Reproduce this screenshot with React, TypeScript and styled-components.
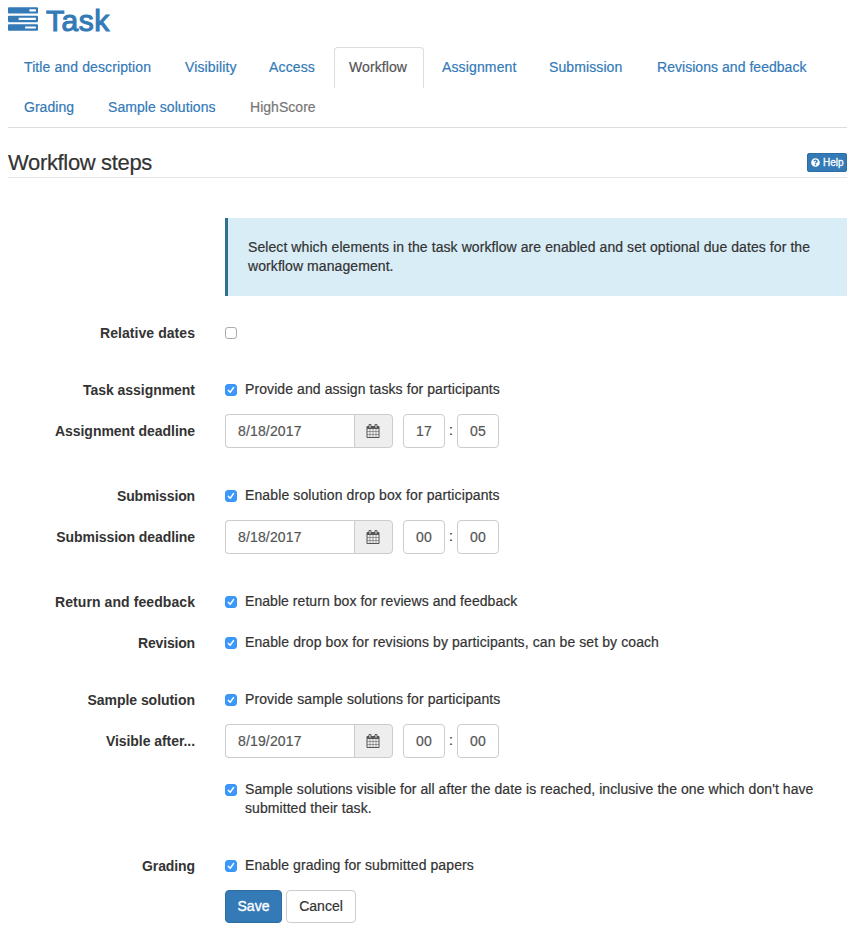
import React, { useState } from 'react';
import styled, { createGlobalStyle } from 'styled-components';
import { FaQuestionCircle } from 'react-icons/fa';

const GlobalStyle = createGlobalStyle`
  *, *::before, *::after { box-sizing: border-box; }
  body {
    margin: 0;
    background: #fff;
    color: #333;
    font: 14px/19px "Liberation Sans", Arial, sans-serif;
    -webkit-text-stroke: 0.2px currentColor;
  }
  input, button { font: inherit; }
`;

const Page = styled.main`
  width: 850px;
  height: 928px;
  overflow: hidden;
  padding: 5px 3px 0 8px;
`;

const PageTitle = styled.h1`
  display: flex;
  align-items: flex-start;
  gap: 8px;
  height: 42px;
  margin: 0;
  color: #337ab7;
  font-size: 30px;
  font-weight: 400;
  line-height: 32px;
  letter-spacing: 0.5px;
  -webkit-text-stroke: 1.1px currentColor;
  svg { display: block; }
`;

const Tabs = styled.nav`
  display: flex;
  flex-wrap: wrap;
  column-gap: 2px;
  height: 81px;
  border-bottom: 1px solid #ddd;
`;

const Tab = styled.a<{ $width: number; $track: number; $active?: boolean; $disabled?: boolean }>`
  width: ${(p) => p.$width}px;
  height: ${(p) => (p.$active ? 41 : 40)}px;
  margin-bottom: ${(p) => (p.$active ? -1 : 0)}px;
  padding: 10px 0 0 ${(p) => (p.$active ? 14 : 15)}px;
  border: 1px solid ${(p) => (p.$active ? '#ddd' : 'transparent')};
  border-bottom: 0;
  border-radius: 4px 4px 0 0;
  color: ${(p) => (p.$active ? '#555' : p.$disabled ? '#777' : '#337ab7')};
  letter-spacing: ${(p) => p.$track}px;
  white-space: nowrap;
  text-decoration: none;
`;

const SectionHeader = styled.header`
  display: flex;
  justify-content: space-between;
  align-items: flex-start;
  height: 50px;
  padding-top: 25px;
  border-bottom: 1px solid #e5e5e5;
`;

const SectionTitle = styled.h2`
  margin: -2px 0 0;
  font-size: 22px;
  font-weight: 400;
  line-height: 23px;
  letter-spacing: -0.34px;
`;

const HelpButton = styled.a`
  display: flex;
  align-items: center;
  gap: 3px;
  width: 40px;
  height: 19px;
  padding-left: 3px;
  border: 1px solid #2e6da4;
  border-radius: 2px;
  background: #337ab7;
  color: #fff;
  font-size: 10px;
  line-height: 17px;
  -webkit-text-stroke: 0.3px #fff;
`;

const Form = styled.form`
  display: flex;
  flex-direction: column;
  gap: 16px;
  padding-top: 40px;
`;

const Alert = styled.p`
  height: 78px;
  margin: 0 0 4px 217px;
  padding: 20px;
  border-left: 3px solid #31708f;
  background: #d9edf7;
  letter-spacing: 0.081px;
  white-space: pre-line;
`;

const Section = styled.section`
  display: flex;
  flex-direction: column;
`;

const Row = styled.div<{ $height?: number }>`
  display: grid;
  grid-template-columns: 187px 1fr;
  column-gap: 30px;
  height: ${(p) => p.$height ?? 41}px;
`;

const RowLabel = styled.div<{ $track?: number }>`
  padding-top: 8px;
  font-weight: 700;
  text-align: right;
  letter-spacing: ${(p) => p.$track ?? 0}px;
  -webkit-text-stroke: 0;
`;

const CheckLabel = styled.label<{ $track: number }>`
  display: flex;
  align-items: flex-start;
  gap: 8px;
  padding-top: 7px;
  letter-spacing: ${(p) => p.$track}px;
  white-space: pre-line;
`;

const HiddenInput = styled.input`
  position: absolute;
  opacity: 0;
  pointer-events: none;
`;

const Box = styled.span<{ $checked: boolean }>`
  display: block;
  flex: none;
  width: 12px;
  height: 12px;
  margin-top: 4px;
  border: 1px solid ${(p) => (p.$checked ? '#3b93f7' : '#ababab')};
  border-radius: 3px;
  background: ${(p) => (p.$checked ? '#3b99fc' : '#fff')};
  svg { display: block; }
`;

const Controls = styled.div`
  display: flex;
  align-items: flex-start;
`;

const DateInput = styled.input`
  width: 130px;
  height: 34px;
  padding: 6px 12px;
  border: 1px solid #ccc;
  border-right: 0;
  border-radius: 4px 0 0 4px;
  color: #555;
  letter-spacing: 0.15px;
  outline: 0;
`;

const CalendarButton = styled.button`
  display: flex;
  align-items: center;
  justify-content: center;
  width: 39px;
  height: 34px;
  margin: 0 10px 0 -1px;
  padding: 0 1px 0 0;
  border: 1px solid #ccc;
  border-radius: 0 4px 4px 0;
  background: #eee;
  color: #555;
`;

const TimeInput = styled.input`
  width: 42px;
  height: 34px;
  padding: 6px 0 6px 12px;
  border: 1px solid #ccc;
  border-radius: 4px;
  color: #555;
  letter-spacing: 0.1px;
  outline: 0;
`;

const Colon = styled.span`
  width: 12px;
  padding-top: 7px;
  text-align: center;
`;

const Buttons = styled.div`
  display: flex;
  gap: 4px;
  margin-left: 217px;
`;

const Button = styled.button<{ $primary?: boolean }>`
  width: ${(p) => (p.$primary ? 57 : 70)}px;
  height: 33px;
  padding: 0;
  border: 1px solid ${(p) => (p.$primary ? '#2e6da4' : '#ccc')};
  border-radius: 4px;
  background: ${(p) => (p.$primary ? '#337ab7' : '#fff')};
  color: ${(p) => (p.$primary ? '#fff' : '#333')};
  -webkit-text-stroke: ${(p) => (p.$primary ? '0.35px #fff' : '0.2px #333')};
`;

const TasksIcon = () => (
  <svg width="30" height="30" viewBox="0 0 1792 1792" fill="currentColor" aria-hidden="true">
    <path d="M1024 1408h640v-128h-640v128zM640 896h1024v-128h-1024v128zM1280 384h384v-128h-384v128zM1792 1216v256q0 26-19 45t-45 19h-1664q-26 0-45-19t-19-45v-256q0-26 19-45t45-19h1664q26 0 45 19t19 45zM1792 704v256q0 26-19 45t-45 19h-1664q-26 0-45-19t-19-45v-256q0-26 19-45t45-19h1664q26 0 45 19t19 45zM1792 192v256q0 26-19 45t-45 19h-1664q-26 0-45-19t-19-45v-256q0-26 19-45t45-19h1664q26 0 45 19t19 45z" />
  </svg>
);

const CalendarIcon = () => (
  <svg width="14" height="14" viewBox="0 0 1792 1792" fill="currentColor" aria-hidden="true">
    <path d="M192 1664h288v-288h-288v288zM544 1664h320v-288h-320v288zM192 1312h288v-320h-288v320zM544 1312h320v-320h-320v320zM192 928h288v-288h-288v288zM928 1664h320v-288h-320v288zM544 928h320v-288h-320v288zM1312 1664h288v-288h-288v288zM928 1312h320v-320h-320v320zM576 448v-288q0-13-9.5-22.5t-22.5-9.5h-64q-13 0-22.5 9.5t-9.5 22.5v288q0 13 9.5 22.5t22.5 9.5h64q13 0 22.5-9.5t9.5-22.5zM1312 1312h288v-320h-288v320zM928 928h320v-288h-320v288zM1312 928h288v-288h-288v288zM1344 448v-288q0-13-9.5-22.5t-22.5-9.5h-64q-13 0-22.5 9.5t-9.5 22.5v288q0 13 9.5 22.5t22.5 9.5h64q13 0 22.5-9.5t9.5-22.5zM1728 384v1280q0 52-38 90t-90 38h-1408q-52 0-90-38t-38-90v-1280q0-52 38-90t90-38h128v-96q0-66 47-113t113-47h64q66 0 113 47t47 113v96h384v-96q0-66 47-113t113-47h64q66 0 113 47t47 113v96h128q52 0 90 38t38 90z" />
  </svg>
);

interface CheckProps {
  text?: string;
  track?: number;
  initial?: boolean;
}

function Check({ text, track = 0, initial = true }: CheckProps) {
  const [checked, setChecked] = useState(initial);
  return (
    <CheckLabel $track={track}>
      <HiddenInput type="checkbox" checked={checked} onChange={() => setChecked(!checked)} />
      <Box $checked={checked}>
        {checked && (
          <svg width="10" height="10" viewBox="0 0 10 10" fill="none" stroke="#fff" strokeWidth="1.5" strokeLinecap="round" strokeLinejoin="round">
            <path d="M2.4 5.4L4.2 7.3L7.5 2.6" />
          </svg>
        )}
      </Box>
      {text && <span>{text}</span>}
    </CheckLabel>
  );
}

function DateTime({ date, hour, minute }: { date: string; hour: string; minute: string }) {
  return (
    <Controls>
      <DateInput defaultValue={date} aria-label="Date" />
      <CalendarButton type="button" aria-label="Open calendar">
        <CalendarIcon />
      </CalendarButton>
      <TimeInput defaultValue={hour} aria-label="Hour" />
      <Colon>:</Colon>
      <TimeInput defaultValue={minute} aria-label="Minute" />
    </Controls>
  );
}

const tabs = [
  { name: 'Title and description', width: 159, track: 0.11 },
  { name: 'Visibility', width: 82, track: 0.14 },
  { name: 'Access', width: 79, track: 0.15 },
  { name: 'Workflow', width: 90, track: 0.09, active: true },
  { name: 'Assignment', width: 105, track: 0.14 },
  { name: 'Submission', width: 106, track: 0.1 },
  { name: 'Revisions and feedback', width: 180, track: 0.04 },
  { name: 'Grading', width: 82, track: 0.03 },
  { name: 'Sample solutions', width: 140, track: 0.06 },
  { name: 'HighScore', width: 98, track: 0.03, disabled: true },
];

export default function App() {
  return (
    <>
      <GlobalStyle />
      <Page>
        <PageTitle>
          <TasksIcon />
          Task
        </PageTitle>
        <Tabs>
          {tabs.map((t) => (
            <Tab key={t.name} $width={t.width} $track={t.track} $active={t.active} $disabled={t.disabled}>
              {t.name}
            </Tab>
          ))}
        </Tabs>
        <SectionHeader>
          <SectionTitle>Workflow steps</SectionTitle>
          <HelpButton>
            <FaQuestionCircle size={9} />
            Help
          </HelpButton>
        </SectionHeader>
        <Form>
          <Alert>
            {'Select which elements in the task workflow are enabled and set optional due dates for the\nworkflow management.'}
          </Alert>
          <Section>
            <Row>
              <RowLabel $track={0.06}>Relative dates</RowLabel>
              <Check initial={false} />
            </Row>
          </Section>
          <Section>
            <Row>
              <RowLabel $track={-0.04}>Task assignment</RowLabel>
              <Check text="Provide and assign tasks for participants" track={0.085} />
            </Row>
            <Row $height={49}>
              <RowLabel $track={-0.04}>Assignment deadline</RowLabel>
              <DateTime date="8/18/2017" hour="17" minute="05" />
            </Row>
          </Section>
          <Section>
            <Row>
              <RowLabel $track={-0.13}>Submission</RowLabel>
              <Check text="Enable solution drop box for participants" track={0.12} />
            </Row>
            <Row $height={49}>
              <RowLabel $track={-0.07}>Submission deadline</RowLabel>
              <DateTime date="8/18/2017" hour="00" minute="00" />
            </Row>
          </Section>
          <Section>
            <Row>
              <RowLabel $track={0.08}>Return and feedback</RowLabel>
              <Check text="Enable return box for reviews and feedback" track={0.055} />
            </Row>
            <Row>
              <RowLabel $track={-0.17}>Revision</RowLabel>
              <Check text="Enable drop box for revisions by participants, can be set by coach" track={0.094} />
            </Row>
          </Section>
          <Section>
            <Row>
              <RowLabel $track={-0.04}>Sample solution</RowLabel>
              <Check text="Provide sample solutions for participants" track={0.1} />
            </Row>
            <Row $height={49}>
              <RowLabel $track={-0.06}>Visible after...</RowLabel>
              <DateTime date="8/19/2017" hour="00" minute="00" />
            </Row>
            <Row $height={60}>
              <span />
              <Check
                text={"Sample solutions visible for all after the date is reached, inclusive the one which don't have\nsubmitted their task."}
                track={0.066}
              />
            </Row>
          </Section>
          <Section>
            <Row>
              <RowLabel $track={-0.1}>Grading</RowLabel>
              <Check text="Enable grading for submitted papers" track={0.09} />
            </Row>
            <Buttons>
              <Button type="button" $primary>Save</Button>
              <Button type="button">Cancel</Button>
            </Buttons>
          </Section>
        </Form>
      </Page>
    </>
  );
}
